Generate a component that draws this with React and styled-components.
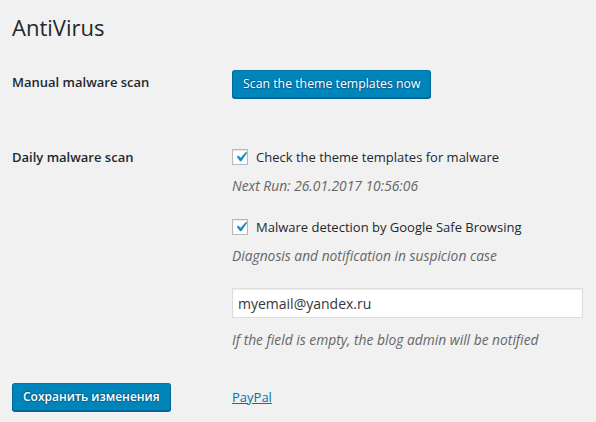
import styled, { createGlobalStyle } from "styled-components";

const GlobalStyle = createGlobalStyle`
  html, body {
    margin: 0;
    background: #f1f1f1;
  }
  body {
    font-family: "Open Sans", "Noto Sans", sans-serif;
    color: #23282d;
    font-size: 13px;
  }
`;

const CheckIcon = () => (
  <svg width="20" height="20" viewBox="0 0 20 20">
    <path
      d="M14.83 4.89l1.34.94-5.81 8.38H9.02L5.78 9.67l1.34-1.25 2.57 2.4z"
      fill="#1e8cbe"
    />
  </svg>
);

const App = () => {
  return (
    <Wrap>
      <GlobalStyle />
      <Title>AntiVirus</Title>
      <FormTable>
        <Label>Manual malware scan</Label>
        <Cell>
          <PrimaryButton>Scan the theme templates now</PrimaryButton>
        </Cell>

        <Label $top>Daily malware scan</Label>
        <Cell $top>
          <CheckRow>
            <Box>
              <CheckIcon />
            </Box>
            Check the theme templates for malware
          </CheckRow>
          <Description>Next Run: 26.01.2017 10:56:06</Description>

          <CheckRow $gap>
            <Box>
              <CheckIcon />
            </Box>
            Malware detection by Google Safe Browsing
          </CheckRow>
          <Description>Diagnosis and notification in suspicion case</Description>

          <Input defaultValue="myemail@yandex.ru" />
          <Description $after>
            If the field is empty, the blog admin will be notified
          </Description>
        </Cell>
      </FormTable>
      <Footer>
        <PrimaryButton $bold>Сохранить изменения</PrimaryButton>
        <Link href="#">PayPal</Link>
      </Footer>
    </Wrap>
  );
};

const Wrap = styled.div`
  padding: 0 12px;
  width: 596px;
  height: 422px;
  box-sizing: border-box;
  overflow: hidden;
`;

const Title = styled.h1`
  margin: 0;
  padding: 13px 0 0;
  font-size: 22px;
  font-weight: 400;
  line-height: 29px;
`;

const FormTable = styled.div`
  display: grid;
  grid-template-columns: 220px 1fr;
  margin-top: 28px;
`;

const Label = styled.div`
  font-size: 13px;
  font-weight: 600;
  line-height: 20px;
  padding-top: ${(p) => (p.$top ? "49px" : "2px")};
`;

const Cell = styled.div`
  padding-top: ${(p) => (p.$top ? "49px" : "0")};
`;

const PrimaryButton = styled.button`
  font-family: inherit;
  font-size: ${(p) => (p.$bold ? "12px" : "12.3px")};
  font-weight: ${(p) => (p.$bold ? 600 : 400)};
  height: 28px;
  padding: 0 10px 1px;
  color: #fff;
  background: #0085ba;
  border: 1px solid #0073aa;
  border-color: #0073aa #006799 #006799;
  border-radius: 3px;
  box-shadow: 0 1px 0 #006799;
  text-shadow: 0 -1px 1px #006799, 1px 0 1px #006799, 0 1px 1px #006799,
    -1px 0 1px #006799;
  cursor: pointer;
`;

const CheckRow = styled.label`
  display: flex;
  align-items: center;
  gap: 8px;
  font-size: 13px;
  line-height: 20px;
  margin-top: ${(p) => (p.$gap ? "21px" : "0")};
`;

const Box = styled.span`
  display: grid;
  place-items: center;
  box-sizing: border-box;
  width: 16px;
  height: 16px;
  background: #fff;
  border: 1px solid #b4b9be;
  box-shadow: inset 0 1px 2px rgba(0, 0, 0, 0.1);
  overflow: visible;

  & > svg {
    margin: -3px -3px -3px -2px;
  }
`;

const Description = styled.p`
  margin: ${(p) => (p.$after ? "12px" : "9px")} 0 0;
  font-size: 13.8px;
  font-style: italic;
  line-height: 20px;
  color: #666;
`;

const Input = styled.input`
  display: block;
  box-sizing: border-box;
  width: 351px;
  height: 30px;
  margin-top: 22px;
  padding: 3px 5px;
  font-family: inherit;
  font-size: 14px;
  color: #32373c;
  background: #fff;
  border: 1px solid #ddd;
  box-shadow: inset 0 1px 2px rgba(0, 0, 0, 0.07);
  outline: none;
`;

const Footer = styled.div`
  display: grid;
  grid-template-columns: 220px 1fr;
  align-items: center;
  margin-top: 33px;

  & > button {
    justify-self: start;
  }
`;

const Link = styled.a`
  font-size: 13px;
  color: #0073aa;
  text-decoration: underline;
`;

export default App;
